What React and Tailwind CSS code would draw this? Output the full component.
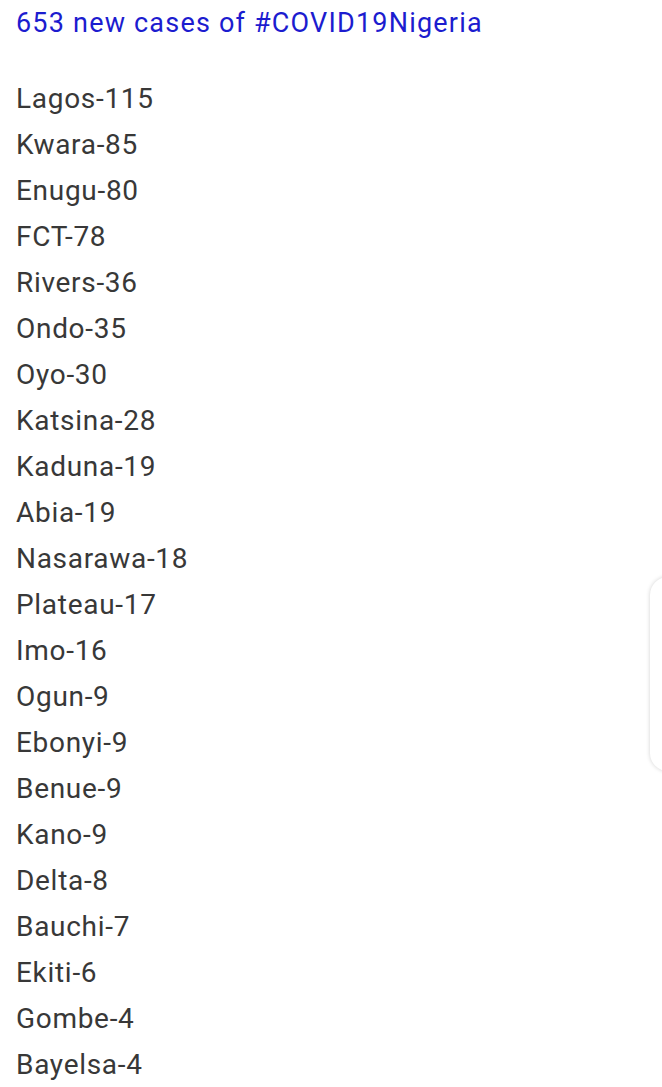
export default function App() {
  const items = [
    "Lagos-115","Kwara-85","Enugu-80","FCT-78","Rivers-36","Ondo-35","Oyo-30","Katsina-28","Kaduna-19","Abia-19","Nasarawa-18","Plateau-17","Imo-16","Ogun-9","Ebonyi-9","Benue-9","Kano-9","Delta-8","Bauchi-7","Ekiti-6","Gombe-4","Bayelsa-4",
  ];
  return (
    <div className="relative w-[662px] h-[1087px] overflow-hidden bg-white" style={{ fontFamily: "Roboto, sans-serif" }}>
      <div className="pl-4 pt-0">
        <div className="text-[27px] leading-[46px] tracking-[1.2px] text-[#1c1ccf]">653 new cases of #COVID19Nigeria</div>
        <div className="mt-[30px] text-[28px] leading-[46px] tracking-[0.7px] text-[#383838]">
          {items.map((t) => (
            <div key={t}>{t}</div>
          ))}
        </div>
      </div>
      <div className="absolute left-[650px] top-[577px] w-[60px] h-[194px] rounded-[18px] bg-white shadow-[0_0_4px_rgba(0,0,0,0.18)]" />
    </div>
  );
}
